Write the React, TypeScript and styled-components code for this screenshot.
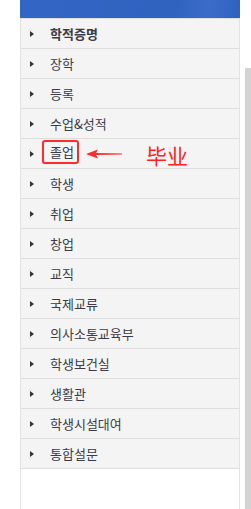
import styled, { createGlobalStyle } from 'styled-components';

const GlobalStyle = createGlobalStyle`
  html, body {
    margin: 0;
    padding: 0;
    background: #fff;
    font-family: 'Noto Sans CJK KR', 'Noto Sans', sans-serif;
  }
`;

const Page = styled.div`
  display: flex;
  width: 251px;
  height: 509px;
  overflow: hidden;
`;

const Panel = styled.div`
  margin-left: 20px;
  width: 221px;
  height: 509px;
  box-sizing: border-box;
  border-left: 1px solid #e2e2e2;
  border-right: 1px solid #e2e2e2;
  display: flex;
  flex-direction: column;
`;

const Header = styled.div`
  height: 18px;
  margin: 0 -1px;
  background: linear-gradient(100deg, #3366c4 0%, #3063c0 70%, #3a6cc8 85%, #2f62c0 100%);
`;

const Menu = styled.ul`
  list-style: none;
  margin: 0;
  padding: 0;
  border-bottom: 1px solid #dedede;
`;

const Item = styled.li<{ $bold?: boolean }>`
  height: 30px;
  box-sizing: border-box;
  border-top: 1px solid #dedede;
  background: #f4f4f4;
  display: flex;
  align-items: center;
  padding-left: 9px;
  font-size: 13px;
  font-weight: ${(p) => (p.$bold ? 700 : 400)};
  color: #3a3a48;
`;

const Arrow = styled.span`
  width: 0;
  height: 0;
  border-top: 3.5px solid transparent;
  border-bottom: 3.5px solid transparent;
  border-left: 4px solid #333;
  margin-right: 16px;
`;

const Label = styled.span<{ $marked?: boolean }>`
  display: inline-block;
  line-height: 20px;
  ${(p) =>
    p.$marked
      ? `
    margin-left: -8px;
    margin-top: -4px;
    padding: 0 3px 0 6px;
    border: 2px solid #ff2a2a;
    border-radius: 3px;
  `
      : ''}
`;

const Note = styled.span`
  display: flex;
  align-items: center;
  margin-left: 7px;
`;

const NoteText = styled.span`
  margin-left: 24px;
  margin-top: 3px;
  font-size: 21px;
  line-height: 24px;
  color: #ff2020;
  font-family: 'Noto Sans CJK SC', sans-serif;
  font-weight: 400;
`;

const Scroll = styled.div`
  margin-left: 5px;
  margin-top: 68px;
  width: 6px;
  background: #d3d3d3;
`;

const items = [
  '학적증명',
  '장학',
  '등록',
  '수업&성적',
  '졸업',
  '학생',
  '취업',
  '창업',
  '교직',
  '국제교류',
  '의사소통교육부',
  '학생보건실',
  '생활관',
  '학생시설대여',
  '통합설문',
];

export default function App() {
  return (
    <>
      <GlobalStyle />
      <Page>
        <Panel>
          <Header />
          <Menu>
            {items.map((name, i) => (
              <Item key={name} $bold={i === 0}>
                <Arrow />
                <Label $marked={name === '졸업'}>{name}</Label>
                {name === '졸업' && (
                  <Note>
                    <svg width="36" height="10" viewBox="0 0 36 10">
                      <path d="M0 5 L12 0.5 L10 4 L36 4.6 L36 5.4 L10 6 L12 9.5 Z" fill="#ff2a2a" />
                    </svg>
                    <NoteText>毕业</NoteText>
                  </Note>
                )}
              </Item>
            ))}
          </Menu>
        </Panel>
        <Scroll />
      </Page>
    </>
  );
}
